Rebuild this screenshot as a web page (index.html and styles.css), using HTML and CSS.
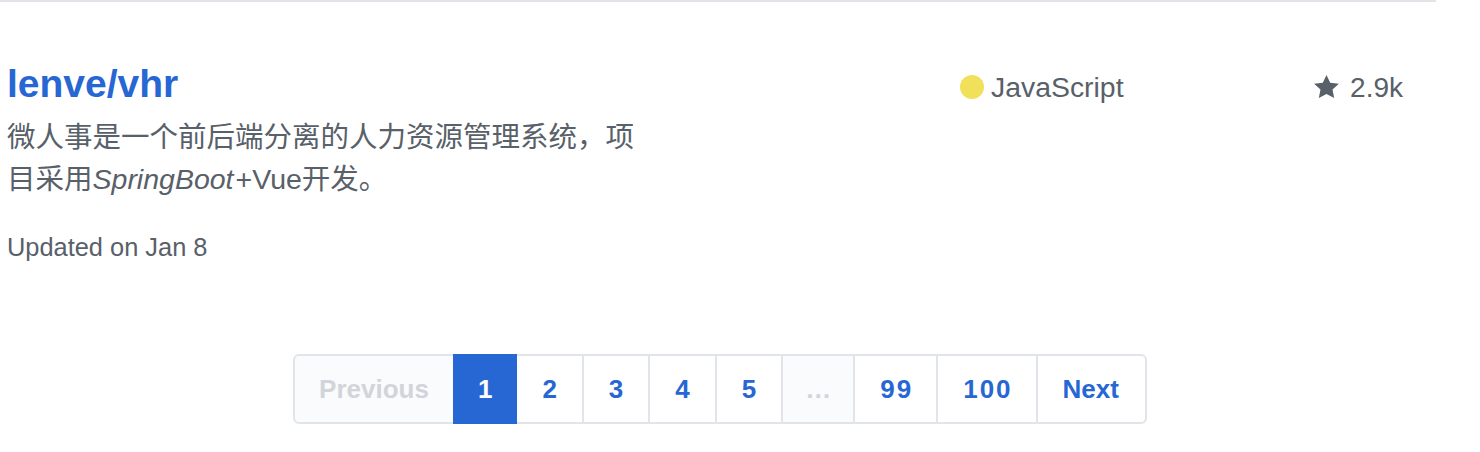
FILE: index.html
```html
<!DOCTYPE html>
<html lang="zh-CN">
<head>
<meta charset="utf-8">
<title>lenve/vhr</title>
<link rel="stylesheet" href="styles.css">
</head>
<body>
<div class="page">
  <div class="repo-list">
    <div class="repo-item">
      <div class="repo-main">
        <h3 class="repo-title"><a href="#">lenve/vhr</a></h3>
        <p class="repo-desc">微人事是一个前后端分离的人力资源管理系统，项目采用<em>SpringBoot</em>+Vue开发。</p>
        <p class="repo-updated">Updated on Jan 8</p>
      </div>
      <div class="repo-lang"><span class="lang-dot"></span><span>JavaScript</span></div>
      <div class="repo-stars">
        <svg class="star" viewBox="0 1 14 13" width="25" height="23" aria-hidden="true"><path d="M14 6l-4.9-.64L7 1 4.9 5.36 0 6l3.6 3.26L2.67 14 7 11.67 11.33 14l-.93-4.74L14 6z"/></svg>
        <span>2.9k</span>
      </div>
    </div>
  </div>
  <div class="pagination-wrap">
    <nav class="pagination">
      <span class="page-item disabled">Previous</span>
      <em class="page-item num current">1</em>
      <a class="page-item num" href="#">2</a>
      <a class="page-item num" href="#">3</a>
      <a class="page-item num" href="#">4</a>
      <a class="page-item num" href="#">5</a>
      <span class="page-item gap">…</span>
      <a class="page-item num" href="#">99</a>
      <a class="page-item num" href="#">100</a>
      <a class="page-item last" href="#">Next</a>
    </nav>
  </div>
</div>
</body>
</html>
```

FILE: styles.css
```css
* { box-sizing: border-box; }

html, body {
  margin: 0;
  padding: 0;
  background: #fff;
}

body {
  font-family: "Liberation Sans", "Noto Sans CJK SC", sans-serif;
  color: #586069;
}

.page {
  width: 1436px;
}

.repo-list {
  border-top: 2px solid #e1e4e8;
}

.repo-item {
  display: flex;
  align-items: baseline;
  padding: 57px 33px 0 7px;
}

.repo-main {
  flex: 0 0 643px;
}

.repo-title {
  margin: 0;
  font-size: 39px;
  line-height: 50px;
  font-weight: bold;
}

.repo-title a {
  color: #2767d3;
  text-decoration: none;
}

.repo-desc {
  margin: 7px 0 0;
  font-size: 28.5px;
  line-height: 42px;
  color: #586069;
}

.repo-desc em {
  font-style: italic;
  margin-right: 2px;
}

.repo-updated {
  margin: 29px 0 0;
  font-size: 25.4px;
  line-height: 36px;
  color: #586069;
}

.repo-lang {
  margin-left: 310px;
  display: flex;
  align-items: baseline;
  gap: 7px;
  font-size: 28.4px;
  line-height: 50px;
  color: #586069;
}

.lang-dot {
  display: inline-block;
  width: 24px;
  height: 24px;
  border-radius: 50%;
  background: #f1e05a;
  position: relative;
  top: 2px;
}

.repo-stars {
  margin-left: auto;
  display: flex;
  align-items: baseline;
  gap: 11px;
  font-size: 28px;
  line-height: 50px;
  color: #586069;
}

.star {
  fill: #586069;
  position: relative;
  top: 1px;
}

.pagination-wrap {
  margin-top: 89px;
  display: flex;
  justify-content: center;
  padding-left: 4px;
}

.pagination {
  display: flex;
}

.page-item {
  display: block;
  min-width: 64px;
  padding: 13px 24px;
  margin-left: -2px;
  font-size: 26px;
  line-height: 40px;
  font-weight: bold;
  font-style: normal;
  text-align: center;
  color: #2767d3;
  background: #fff;
  border: 2px solid #e1e4e8;
  text-decoration: none;
  white-space: nowrap;
}

.page-item.num {
  letter-spacing: 2px;
  padding-left: 25px;
  padding-right: 23px;
}

.page-item:first-child {
  margin-left: 0;
  border-radius: 6px 0 0 6px;
}

.page-item.last {
  border-radius: 0 6px 6px 0;
  padding-left: 25px;
  padding-right: 26px;
}

.page-item.disabled,
.page-item.gap {
  color: #d1d5da;
  background: #fafbfc;
}

.page-item.gap {
  padding-left: 22px;
  padding-right: 22px;
}

.page-item.current {
  color: #fff;
  background: #2767d3;
  border-color: #2767d3;
  position: relative;
  padding-left: 23px;
  padding-right: 21px;
}
```
